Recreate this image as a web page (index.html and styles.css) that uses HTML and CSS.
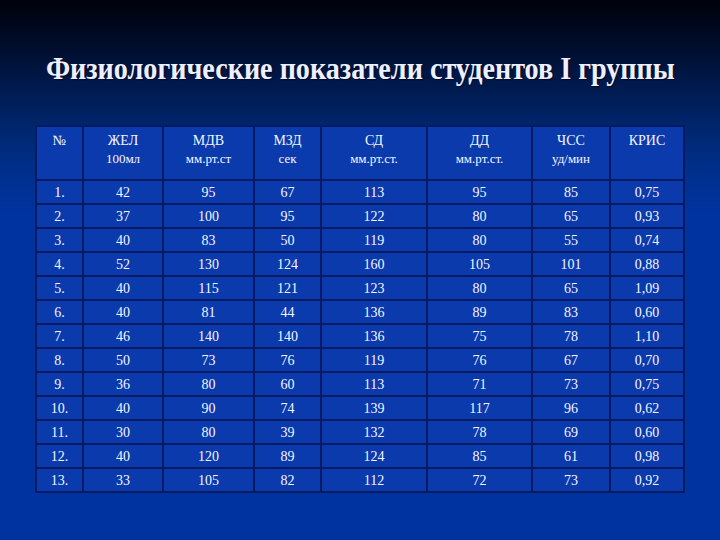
FILE: index.html
```html
<!DOCTYPE html>
<html lang="ru">
<head>
<meta charset="utf-8">
<title>Физиологические показатели</title>
<link rel="stylesheet" href="styles.css">
</head>
<body>
<div class="slide">
  <h1 class="title"><span class="title-text">Физиологические показатели студентов I группы</span></h1>
  <table class="data">
    <colgroup>
      <col class="c1"><col class="c2"><col class="c3"><col class="c4"><col class="c5"><col class="c6"><col class="c7"><col class="c8">
    </colgroup>
    <thead>
      <tr>
        <th>№</th>
        <th>ЖЕЛ<br><span class="unit">100мл</span></th>
        <th>МДВ<br><span class="unit">мм.рт.ст</span></th>
        <th>МЗД<br><span class="unit">сек</span></th>
        <th>СД<br><span class="unit">мм.рт.ст.</span></th>
        <th>ДД<br><span class="unit">мм.рт.ст.</span></th>
        <th>ЧСС<br><span class="unit">уд/мин</span></th>
        <th>КРИС</th>
      </tr>
    </thead>
    <tbody>
      <tr><td>1.</td><td>42</td><td>95</td><td>67</td><td>113</td><td>95</td><td>85</td><td>0,75</td></tr>
      <tr><td>2.</td><td>37</td><td>100</td><td>95</td><td>122</td><td>80</td><td>65</td><td>0,93</td></tr>
      <tr><td>3.</td><td>40</td><td>83</td><td>50</td><td>119</td><td>80</td><td>55</td><td>0,74</td></tr>
      <tr><td>4.</td><td>52</td><td>130</td><td>124</td><td>160</td><td>105</td><td>101</td><td>0,88</td></tr>
      <tr><td>5.</td><td>40</td><td>115</td><td>121</td><td>123</td><td>80</td><td>65</td><td>1,09</td></tr>
      <tr><td>6.</td><td>40</td><td>81</td><td>44</td><td>136</td><td>89</td><td>83</td><td>0,60</td></tr>
      <tr><td>7.</td><td>46</td><td>140</td><td>140</td><td>136</td><td>75</td><td>78</td><td>1,10</td></tr>
      <tr><td>8.</td><td>50</td><td>73</td><td>76</td><td>119</td><td>76</td><td>67</td><td>0,70</td></tr>
      <tr><td>9.</td><td>36</td><td>80</td><td>60</td><td>113</td><td>71</td><td>73</td><td>0,75</td></tr>
      <tr><td>10.</td><td>40</td><td>90</td><td>74</td><td>139</td><td>117</td><td>96</td><td>0,62</td></tr>
      <tr><td>11.</td><td>30</td><td>80</td><td>39</td><td>132</td><td>78</td><td>69</td><td>0,60</td></tr>
      <tr><td>12.</td><td>40</td><td>120</td><td>89</td><td>124</td><td>85</td><td>61</td><td>0,98</td></tr>
      <tr><td>13.</td><td>33</td><td>105</td><td>82</td><td>112</td><td>72</td><td>73</td><td>0,92</td></tr>
    </tbody>
  </table>
</div>
</body>
</html>
```
FILE: styles.css
```css
html, body {
  margin: 0;
  padding: 0;
}
body {
  width: 720px;
  height: 540px;
  overflow: hidden;
  font-family: "Liberation Serif", "Times New Roman", serif;
  color: #ffffff;
  background: linear-gradient(to bottom, #00020a 0%, #000c2a 8%, #001a4e 16%, #00276e 24%, #002f8a 31%, #0033a0 40%, #0033a0 100%);
}
.slide {
  width: 720px;
  height: 540px;
  display: flex;
  flex-direction: column;
  align-items: flex-start;
}
.title {
  align-self: stretch;
  margin: 0;
  padding-top: 50px;
  height: 125px;
  box-sizing: border-box;
  text-align: center;
  font-family: "Liberation Serif", "Times New Roman", serif;
  font-size: 32px;
  line-height: 36px;
  font-weight: bold;
  color: #eef0ff;
  text-shadow: 1px 1px 1px #000a2a;
  white-space: nowrap;
}
.title-text {
  display: inline-block;
  transform: scaleX(0.88);
  transform-origin: center;
}
.data {
  margin-left: 35px;
  border-collapse: collapse;
  table-layout: fixed;
  width: 650px;
  font-family: "Liberation Serif", "Times New Roman", serif;
}
.c1 { width: 47px; }
.c2 { width: 80px; }
.c3 { width: 91px; }
.c4 { width: 67px; }
.c5 { width: 106px; }
.c6 { width: 105px; }
.c7 { width: 78px; }
.c8 { width: 74px; }
.data th, .data td {
  border: 2px solid #081a62;
  background: #0b3aac;
  text-align: center;
  padding: 0;
  font-family: "Liberation Serif", "Times New Roman", serif;
  font-size: 14px;
  font-weight: normal;
  color: #f4f6ff;
}
.data th {
  height: 54px;
  vertical-align: top;
  padding-top: 5px;
  line-height: 18px;
  box-sizing: border-box;
}
.data th .unit {
  font-size: 13px;
}
.data td {
  height: 21px;
  line-height: 21px;
  padding-top: 1px;
}
```
